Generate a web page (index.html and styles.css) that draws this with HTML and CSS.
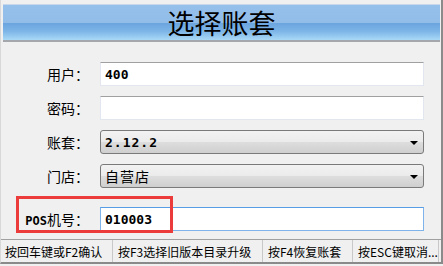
FILE: index.html
```html
<!DOCTYPE html>
<html lang="zh">
<head>
  <meta charset="UTF-8">
  <title>选择账套</title>
  <link rel="stylesheet" href="styles.css">
</head>
<body>
  <div class="window">
    <header class="title-bar">选择账套</header>
    <main class="form">
      <div class="row">
        <label>用户：</label>
        <div class="field text-field mono">400</div>
      </div>
      <div class="row">
        <label>密码：</label>
        <div class="field text-field"></div>
      </div>
      <div class="row">
        <label>账套：</label>
        <div class="field combo mono">2.12.2<span class="arrow"></span></div>
      </div>
      <div class="row">
        <label>门店：</label>
        <div class="field combo">自营店<span class="arrow"></span></div>
      </div>
      <div class="row row-pos">
        <label><span class="pos">POS</span>机号：</label>
        <div class="field text-field focused mono">010003</div>
        <div class="highlight"></div>
      </div>
    </main>
    <footer class="status-bar">
      <span class="seg seg1">按回车键或F2确认</span>
      <span class="seg seg2">按F3选择旧版本目录升级</span>
      <span class="seg seg3">按F4恢复账套</span>
      <span class="seg seg4">按ESC键取消...</span>
    </footer>
  </div>
</body>
</html>
```

FILE: styles.css
```css
* {
  margin: 0;
  padding: 0;
  box-sizing: border-box;
}
body {
  width: 443px;
  height: 266px;
  background-color: #f0f0f0;
  font-family: "Noto Sans CJK SC", "Liberation Sans", sans-serif;
  overflow: hidden;
}
.window {
  width: 443px;
  height: 264px;
  background-color: #f0f0f0;
  border-left: 1px solid #d8d8d8;
  border-right: 2px solid #8a8a8a;
  border-bottom: 2px solid #8a8a8a;
  display: flex;
  flex-direction: column;
}
.title-bar {
  margin: 4px 1px 0 2px;
  height: 38px;
  border-top: 1px solid #c8d8ea;
  border-bottom: 2px solid #a4a8ac;
  background: linear-gradient(to bottom, #96c0ec 0%, #93bde9 50%, #6ba5df 52%, #7db5e7 75%, #a9d9f6 100%);
  text-align: center;
  font-size: 27px;
  line-height: 35px;
  color: #000;
}
.form {
  flex: 1;
  display: flex;
  flex-direction: column;
  padding-top: 20px;
  gap: 10px;
}
.row {
  position: relative;
  display: flex;
  align-items: center;
  height: 24px;
}
.row label {
  width: 99px;
  padding-right: 11px;
  text-align: right;
  font-size: 14px;
  color: #000;
}
.pos {
  font-family: "DejaVu Sans Mono", monospace;
  font-weight: bold;
  font-size: 12px;
}
.field {
  width: 324px;
  height: 24px;
  font-size: 14px;
  display: flex;
  align-items: center;
  padding-left: 4px;
  position: relative;
}
.mono {
  font-family: "DejaVu Sans Mono", monospace;
  font-weight: bold;
  font-size: 13px;
}
.text-field {
  background-color: #fff;
  border: 1px solid #e2e6ee;
  border-top-color: #a0a0a0;
}
.text-field.focused {
  border-color: #7eb4ea;
  border-top-color: #569de5;
}
.combo {
  border: 1px solid #7a7a7a;
  border-radius: 3px;
  background: linear-gradient(to bottom, #f2f2f2 0%, #ebebeb 50%, #dddddd 52%, #cfcfcf 100%);
  letter-spacing: 1px;
}
.arrow {
  position: absolute;
  right: 5px;
  top: 10px;
  width: 0;
  height: 0;
  border-left: 4px solid transparent;
  border-right: 4px solid transparent;
  border-top: 4px solid #000;
}
.row-pos {
  margin-top: 9px;
}
.highlight {
  position: absolute;
  left: 15px;
  top: -11px;
  width: 157px;
  height: 37px;
  border: 3px solid #ec3b3b;
}
.status-bar {
  height: 23px;
  border-top: 1px solid #a0a0a0;
  display: flex;
  align-items: center;
  font-size: 12px;
  color: #000;
}
.seg {
  height: 100%;
  display: flex;
  align-items: center;
  border-right: 1px solid #c8c8c8;
  padding-left: 4px;
}
.seg1 { width: 112px; }
.seg2 { width: 150px; padding-left: 5px; }
.seg3 { width: 90px; padding-left: 5px; }
.seg4 { width: 86px; padding-left: 5px; }
```
